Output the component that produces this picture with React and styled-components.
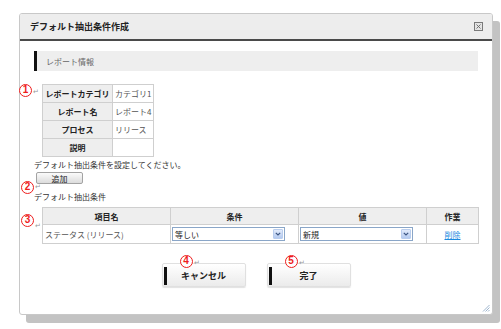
import React from "react";
import styled, { createGlobalStyle } from "styled-components";

const Global = createGlobalStyle`
  html, body { margin: 0; padding: 0; background: #fff; }
  body { font-family: "Noto Sans CJK JP", "Noto Sans", sans-serif; color: #333; }
  * { box-sizing: border-box; }
`;

const Page = styled.div`
  width: 501px;
  height: 329px;
  padding: 13px 0 0 19px;
  overflow: hidden;
`;

const Dialog = styled.div`
  position: relative;
  width: 474px;
  height: 302px;
  border: 1px solid #c8c8c8;
  border-radius: 3px;
  background: #fff;
  box-shadow: 7px 8px 0 #c3c3c3;
  display: flex;
  flex-direction: column;
`;

const TitleBar = styled.div`
  height: 27px;
  display: flex;
  align-items: center;
  padding: 0 9px 0 10px;
  background: #ededed;
  border-bottom: 2px solid #4a4a4a;
  border-radius: 2px 2px 0 0;
`;

const Title = styled.div`
  font-size: 9px;
  font-weight: bold;
  color: #222;
  line-height: 1;
`;

const CloseBox = styled.div`
  margin-left: auto;
  width: 9px;
  height: 9px;
  border: 1px solid #7a7a7a;
  background: #e4e4e4;
  display: flex;
  align-items: center;
  justify-content: center;
`;

const Body = styled.div`
  position: relative;
  flex: 1;
  padding: 10px 14px 0 14px;
  display: flex;
  flex-direction: column;
  font-size: 8px;
`;

const SectionHeader = styled.div`
  height: 20px;
  display: flex;
  align-items: center;
  padding-left: 9px;
  border-left: 3px solid #111;
  background: #eeeeee;
  color: #666;
  font-size: 8px;
`;

const Annotated = styled.div`
  position: relative;
  padding-left: ${(p) => p.$indent || 0}px;
  margin-top: ${(p) => p.$top || 0}px;
`;

const Marker = styled.span`
  position: absolute;
  left: ${(p) => p.$x}px;
  top: ${(p) => p.$y}px;
  display: flex;
  align-items: flex-start;
  pointer-events: none;
  z-index: 2;
`;

const Circle = styled.span`
  width: 13px;
  height: 13px;
  border: 1.5px solid #ee1c1c;
  border-radius: 50%;
  background: #fff;
  color: #ee1c1c;
  font-family: "Liberation Sans", Arial, sans-serif;
  font-weight: bold;
  font-size: 10px;
  line-height: 10px;
  text-align: center;
`;

const Return = styled.span`
  margin-top: ${(p) => p.$dy || 3}px;
  margin-left: 1px;
  font-size: 7px;
  line-height: 7px;
  color: #999;
`;

const InfoTable = styled.table`
  border-collapse: collapse;
  font-size: 8px;
  & tr { height: 18px; }
`;

const HeadCell = styled.th`
  width: ${(p) => p.$w}px;
  border: 1px solid #cfcfcf;
  background: #eeeeee;
  color: #222;
  font-weight: bold;
  text-align: center;
  padding: 0 1px;
  white-space: nowrap;
`;

const ValueCell = styled.td`
  width: ${(p) => p.$w}px;
  border: 1px solid #cfcfcf;
  color: #555;
  padding: 0 2px;
  text-align: ${(p) => p.$align || "left"};
  white-space: nowrap;
`;

const Hint = styled.div`
  margin-top: 1px;
  line-height: 14px;
  color: #333;
`;

const AddButton = styled.button`
  margin-left: 2px;
  width: 47px;
  height: 12px;
  padding: 0;
  border: 1px solid #a3a3a3;
  border-radius: 2px;
  background: linear-gradient(#fbfbfb, #dcdcdc);
  font-family: inherit;
  font-size: 8px;
  line-height: 9px;
  color: #222;
`;

const Label = styled.div`
  margin-top: 6px;
  line-height: 13px;
  color: #333;
`;

const CondTable = styled.table`
  width: 436px;
  border-collapse: collapse;
  table-layout: fixed;
  font-size: 8px;
`;

const CondHeadRow = styled.tr`
  height: 17px;
`;

const CondRow = styled.tr`
  height: 19px;
`;

const CondHead = styled.th`
  border: 1px solid #cfcfcf;
  background: #eeeeee;
  color: #222;
  font-weight: bold;
  text-align: center;
  padding: 0;
`;

const CondCell = styled.td`
  border: 1px solid #cfcfcf;
  color: #555;
  padding: 0 ${(p) => (p.$pad != null ? p.$pad : 1)}px;
  text-align: ${(p) => p.$align || "left"};
  white-space: nowrap;
`;

const Select = styled.div`
  width: 113px;
  height: 14px;
  border: 1px solid #8aa6c8;
  display: flex;
  align-items: center;
  padding-left: 2px;
  color: #222;
  background: #fff;
`;

const DropBtn = styled.span`
  margin-left: auto;
  margin-right: 1px;
  width: 10px;
  height: 10px;
  border: 1px solid #b9cdee;
  border-radius: 1px;
  background: linear-gradient(#e2ebfb, #b4caf0);
  display: flex;
  align-items: center;
  justify-content: center;
`;

const DeleteLink = styled.a`
  color: #1a8ae0;
  text-decoration: underline;
  cursor: pointer;
`;

const ButtonRow = styled.div`
  margin-top: 19px;
  display: flex;
  justify-content: center;
  gap: 21px;
`;

const ActionButton = styled.button`
  position: relative;
  width: 84px;
  height: 24px;
  padding: 0;
  border: 1px solid #e0e0e0;
  border-radius: 2px;
  background: linear-gradient(#ffffff, #ebebeb);
  box-shadow: 0 1px 1px rgba(0, 0, 0, 0.12);
  font-family: inherit;
  font-size: 9px;
  font-weight: bold;
  color: #222;
  &::before {
    content: "";
    position: absolute;
    left: 1px;
    top: 3px;
    bottom: 1px;
    width: 3px;
    background: #111;
  }
`;

const Grip = styled.svg`
  position: absolute;
  right: 2px;
  bottom: 2px;
`;

const Mark = ({ n, x, y, dy }) => (
  <Marker $x={x} $y={y}>
    <Circle>{n}</Circle>
    <Return $dy={dy}>↵</Return>
  </Marker>
);

const Chevron = () => (
  <svg width="6" height="4" viewBox="0 0 6 4">
    <path d="M0.8 0.8 L3 3 L5.2 0.8" fill="none" stroke="#3d5683" strokeWidth="1.2" />
  </svg>
);

export default function App() {
  return (
    <>
      <Global />
      <Page>
        <Dialog>
          <TitleBar>
            <Title>デフォルト抽出条件作成</Title>
            <CloseBox>
              <svg width="5" height="5" viewBox="0 0 5 5">
                <path d="M0.5 0.5 L4.5 4.5 M4.5 0.5 L0.5 4.5" stroke="#666" strokeWidth="0.9" />
              </svg>
            </CloseBox>
          </TitleBar>
          <Body>
            <SectionHeader>レポート情報</SectionHeader>

            <Annotated $indent={8} $top={13}>
              <Mark n="1" x={-15} y={0} dy={4} />
              <InfoTable>
                <tbody>
                  <tr>
                    <HeadCell $w={70}>レポートカテゴリ</HeadCell>
                    <ValueCell $w={40}>カテゴリ1</ValueCell>
                  </tr>
                  <tr>
                    <HeadCell $w={70}>レポート名</HeadCell>
                    <ValueCell $w={40}>レポート4</ValueCell>
                  </tr>
                  <tr>
                    <HeadCell $w={70}>プロセス</HeadCell>
                    <ValueCell $w={40}>リリース</ValueCell>
                  </tr>
                  <tr>
                    <HeadCell $w={70}>説明</HeadCell>
                    <ValueCell $w={40}></ValueCell>
                  </tr>
                </tbody>
              </InfoTable>
            </Annotated>

            <Hint>デフォルト抽出条件を設定してください。</Hint>

            <Annotated>
              <Mark n="2" x={-13} y={9} dy={2} />
              <AddButton>追加</AddButton>
            </Annotated>

            <Label>デフォルト抽出条件</Label>

            <Annotated $indent={8} $top={4}>
              <Mark n="3" x={-13} y={7} dy={8} />
              <CondTable>
                <colgroup>
                  <col style={{ width: 128 }} />
                  <col style={{ width: 128 }} />
                  <col style={{ width: 128 }} />
                  <col style={{ width: 52 }} />
                </colgroup>
                <thead>
                  <CondHeadRow>
                    <CondHead>項目名</CondHead>
                    <CondHead>条件</CondHead>
                    <CondHead>値</CondHead>
                    <CondHead>作業</CondHead>
                  </CondHeadRow>
                </thead>
                <tbody>
                  <CondRow>
                    <CondCell $pad={2}>ステータス (リリース)</CondCell>
                    <CondCell>
                      <Select>
                        等しい
                        <DropBtn>
                          <Chevron />
                        </DropBtn>
                      </Select>
                    </CondCell>
                    <CondCell>
                      <Select>
                        新規
                        <DropBtn>
                          <Chevron />
                        </DropBtn>
                      </Select>
                    </CondCell>
                    <CondCell $align="center">
                      <DeleteLink>削除</DeleteLink>
                    </CondCell>
                  </CondRow>
                </tbody>
              </CondTable>
            </Annotated>

            <ButtonRow>
              <Annotated>
                <Mark n="4" x={18} y={-8} dy={4} />
                <ActionButton>キャンセル</ActionButton>
              </Annotated>
              <Annotated>
                <Mark n="5" x={18} y={-8} dy={4} />
                <ActionButton>完了</ActionButton>
              </Annotated>
            </ButtonRow>
          </Body>
          <Grip width="8" height="8" viewBox="0 0 8 8">
            <path d="M7.5 1 L1 7.5 M7.5 3.5 L3.5 7.5 M7.5 6 L6 7.5" stroke="#9fb6cf" strokeWidth="1" />
          </Grip>
        </Dialog>
      </Page>
    </>
  );
}
